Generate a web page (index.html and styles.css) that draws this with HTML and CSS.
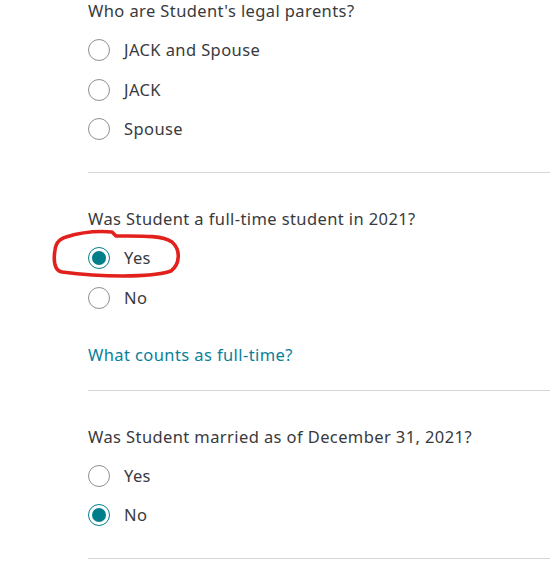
FILE: index.html
```html
<!DOCTYPE html>
<html>
<head>
<meta charset="utf-8">
<link rel="stylesheet" href="styles.css">
</head>
<body>
<div class="page">
  <section class="question first">
    <div class="q-title">Who are Student's legal parents?</div>
    <div class="options">
      <label class="option"><span class="radio"></span><span class="label">JACK and Spouse</span></label>
      <label class="option"><span class="radio"></span><span class="label">JACK</span></label>
      <label class="option"><span class="radio"></span><span class="label">Spouse</span></label>
    </div>
  </section>
  <section class="question">
    <div class="q-title">Was Student a full-time student in 2021?</div>
    <div class="options">
      <label class="option"><span class="radio checked"></span><span class="label">Yes</span></label>
      <label class="option"><span class="radio"></span><span class="label">No</span></label>
    </div>
    <a class="link" href="#">What counts as full-time?</a>
  </section>
  <section class="question">
    <div class="q-title">Was Student married as of December 31, 2021?</div>
    <div class="options">
      <label class="option"><span class="radio"></span><span class="label">Yes</span></label>
      <label class="option"><span class="radio checked"></span><span class="label">No</span></label>
    </div>
  </section>
</div>
<svg class="annotation" width="550" height="564" viewBox="0 0 550 564">
  <path d="M 66 237 C 82 232, 100 231, 112 232 L 116 236 C 140 236, 162 235, 172 242 C 181 250, 180 264, 171 271 C 150 278, 100 277, 62 272 C 55 271, 53 262, 55 250 C 56 242, 60 238, 70 236" fill="none" stroke="#e3211c" stroke-width="3.6" stroke-linecap="round" stroke-linejoin="round"/>
</svg>
</body>
</html>
```

FILE: styles.css
```css
html, body {
  margin: 0;
  padding: 0;
  background: #ffffff;
}

body {
  font-family: "Noto Sans", "Lato", sans-serif;
  color: #393a3d;
  font-size: 16.5px;
  letter-spacing: 0.4px;
  position: relative;
  width: 550px;
  height: 564px;
  overflow: hidden;
}

.page {
  padding-left: 88px;
}

.question {
  padding-top: 35px;
  padding-bottom: 23px;
  border-bottom: 1px solid #d6d7da;
  display: flex;
  flex-direction: column;
}

.question.first {
  padding-top: 0;
}

.q-title {
  line-height: 22px;
  height: 22px;
  margin-bottom: 8.5px;
}

.options {
  display: flex;
  flex-direction: column;
}

.option {
  height: 39.5px;
  display: flex;
  align-items: center;
  gap: 14px;
}

.radio {
  box-sizing: border-box;
  width: 22px;
  height: 22px;
  border-radius: 50%;
  border: 1.5px solid #8d9096;
  display: flex;
  align-items: center;
  justify-content: center;
  flex: none;
}

.radio.checked {
  border-color: #00808c;
}

.radio.checked::after {
  content: "";
  width: 14px;
  height: 14px;
  border-radius: 50%;
  background: #007e89;
}

.label {
  line-height: 22px;
}

.link {
  margin-top: 26px;
  line-height: 22px;
  color: #0a7f99;
  text-decoration: none;
  align-self: flex-start;
  margin-bottom: 1px;
}

.annotation {
  position: absolute;
  left: 0;
  top: 0;
  pointer-events: none;
}
```
